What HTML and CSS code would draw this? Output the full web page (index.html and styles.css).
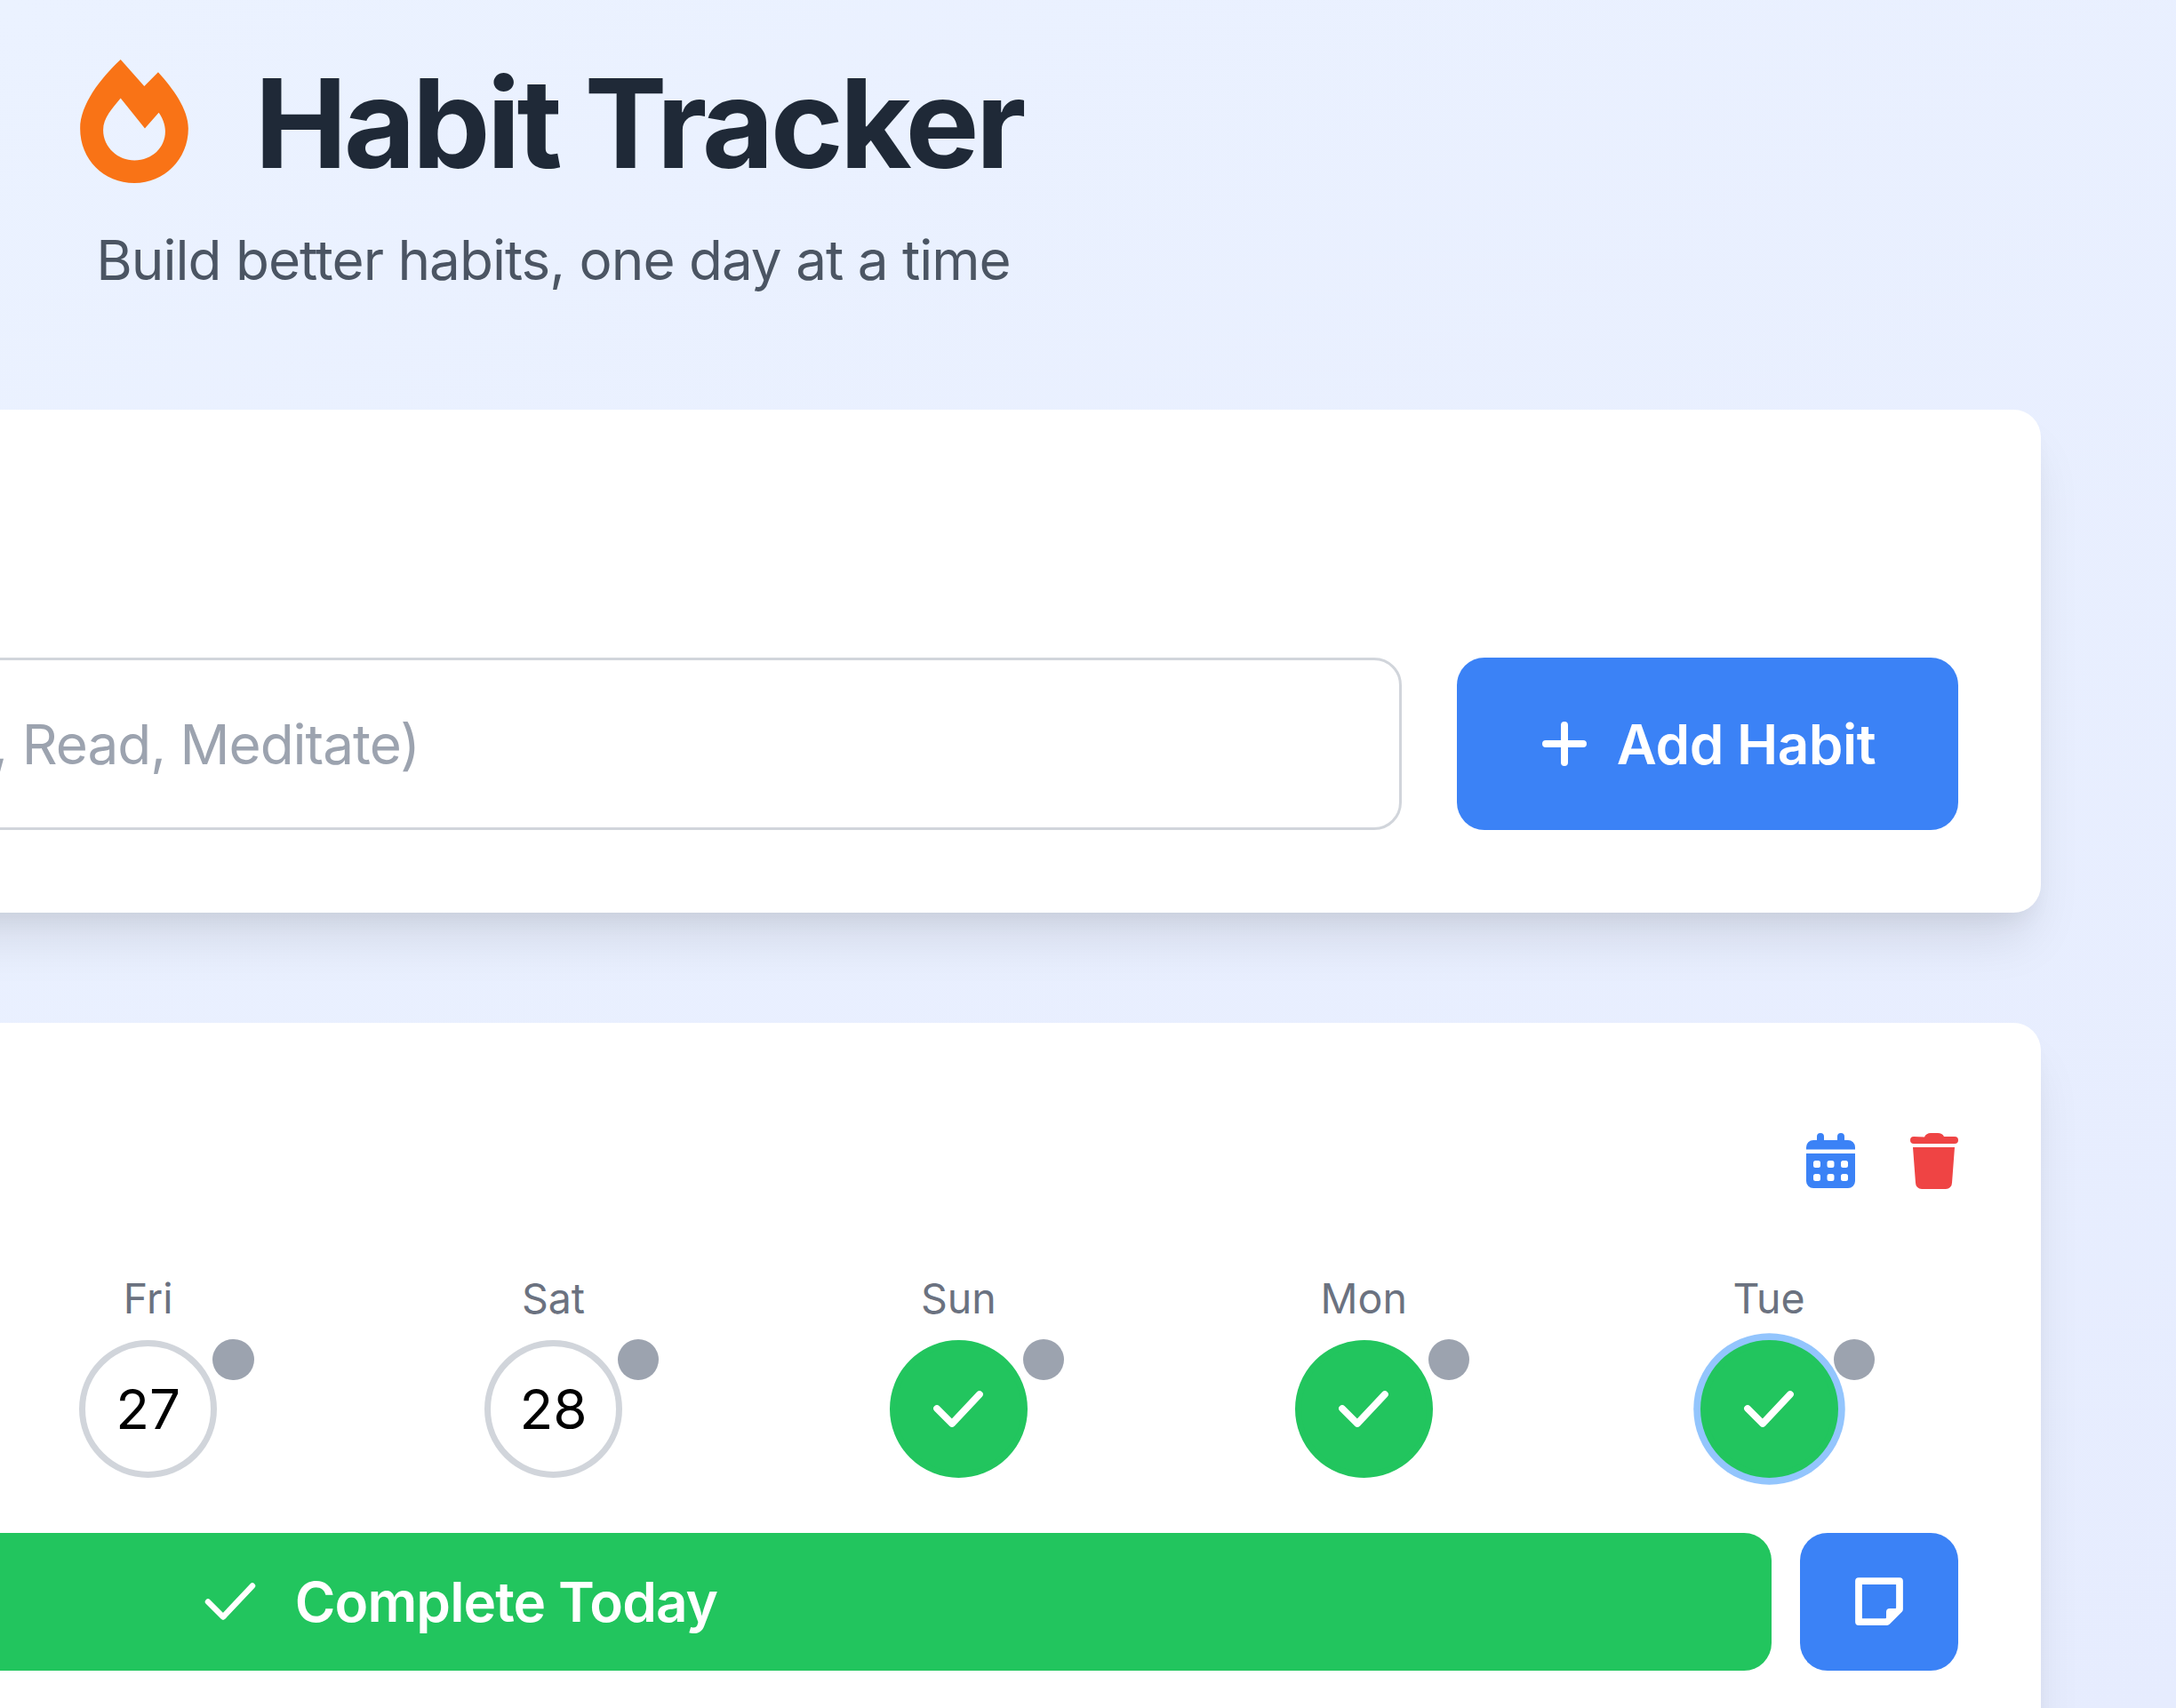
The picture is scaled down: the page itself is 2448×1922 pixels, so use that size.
FILE: index.html
```html
<!DOCTYPE html>
<html lang="en">
<head>
<meta charset="utf-8">
<title>Habit Tracker</title>
<link rel="stylesheet" href="styles.css">
</head>
<body>
<div class="app">
  <header class="header">
    <div class="brand">
      <svg class="flame" viewBox="61 47 366 418"><path fill-rule="evenodd" d="M198 47L278 137L325 90C375 145 427 215 427 280C427 385 345 465 245 465C140 465 61 385 61 280C61 200 130 110 198 47ZM198 178C170 212 139 245 139 285C139 345 190 388 245 388C305 388 349 345 349 290C349 268 340 245 327 227L280 280Z"/></svg>
      <h1 class="title">Habit Tracker</h1>
    </div>
    <p class="subtitle">Build better habits, one day at a time</p>
  </header>

  <section class="card">
    <form class="add-form">
      <input class="habit-input" type="text" placeholder="Enter a new habit (e.g., Exercise, Read, Meditate)">
      <button class="btn btn-add" type="button">
        <svg class="plus" viewBox="0 0 56 50"><path d="M28 4V46M7 25H49"/></svg>
        <span>Add Habit</span>
      </button>
    </form>
  </section>

  <section class="card">
    <div class="habit-head">
      <div class="habit-actions">
        <svg class="icon-cal" viewBox="0 0 55 62"><path d="M12 8V4a4 4 0 0 1 8 0V8H35V4a4 4 0 0 1 8 0V8H47a8 8 0 0 1 8 8V18.500H0V16a8 8 0 0 1 8-8Z"/><path fill-rule="evenodd" d="M0 23H55V54a8 8 0 0 1-8 8H8a8 8 0 0 1-8-8ZM10.500 31a2.500 2.500 0 0 0-2.500 2.500v3a2.500 2.500 0 0 0 2.500 2.500h3a2.500 2.500 0 0 0 2.500-2.500v-3a2.500 2.500 0 0 0-2.500-2.500ZM26 31a2.500 2.500 0 0 0-2.500 2.500v3a2.500 2.500 0 0 0 2.500 2.500h3a2.500 2.500 0 0 0 2.500-2.500v-3a2.500 2.500 0 0 0-2.500-2.500ZM41.500 31a2.500 2.500 0 0 0-2.500 2.500v3a2.500 2.500 0 0 0 2.500 2.500h3a2.500 2.500 0 0 0 2.500-2.500v-3a2.500 2.500 0 0 0-2.500-2.500ZM10.500 46a2.500 2.500 0 0 0-2.500 2.500v3a2.500 2.500 0 0 0 2.500 2.500h3a2.500 2.500 0 0 0 2.500-2.500v-3a2.500 2.500 0 0 0-2.500-2.500ZM26 46a2.500 2.500 0 0 0-2.500 2.500v3a2.500 2.500 0 0 0 2.500 2.500h3a2.500 2.500 0 0 0 2.500-2.500v-3a2.500 2.500 0 0 0-2.500-2.500ZM41.500 46a2.500 2.500 0 0 0-2.500 2.500v3a2.500 2.500 0 0 0 2.500 2.500h3a2.500 2.500 0 0 0 2.500-2.500v-3a2.500 2.500 0 0 0-2.500-2.500Z"/></svg>
        <svg class="icon-trash" viewBox="0 0 54 63"><path d="M16 4.500C17 1.500 20 0 23 0H31C34 0 37 1.500 38 4H50a4 4 0 0 1 0 8H4a4 4 0 0 1 0-8Z"/><path d="M3 16H50L47 56a7 7 0 0 1-7 7H13a7 7 0 0 1-7-7Z"/></svg>
      </div>
    </div>
    <div class="days">
      <div class="day day-first"><span class="day-label">Fri</span><div class="day-circle">27<span class="dot"></span></div></div>
      <div class="day"><span class="day-label">Sat</span><div class="day-circle">28<span class="dot"></span></div></div>
      <div class="day"><span class="day-label">Sun</span><div class="day-circle done"><svg class="tick" viewBox="0 0 62 48"><path d="M7 24L24 41L55 8"/></svg><span class="dot"></span></div></div>
      <div class="day"><span class="day-label">Mon</span><div class="day-circle done"><svg class="tick" viewBox="0 0 62 48"><path d="M7 24L24 41L55 8"/></svg><span class="dot"></span></div></div>
      <div class="day"><span class="day-label">Tue</span><div class="day-circle done today"><svg class="tick" viewBox="0 0 62 48"><path d="M7 24L24 41L55 8"/></svg><span class="dot"></span></div></div>
    </div>
    <div class="habit-foot">
      <button class="btn btn-complete" type="button">
        <svg class="check" viewBox="0 0 62 62"><path d="M6 31.500L23 48.500L56 13.500"/></svg>
        <span>Complete Today</span>
      </button>
      <button class="btn btn-note" type="button" aria-label="Note">
        <svg class="note" viewBox="0 0 54 54"><path class="note-line" d="M4 4H50V36L36 50H4Z"/><path class="note-fold" d="M35 39a4 4 0 0 1 4-4H50V38L38 50H35Z"/></svg>
      </button>
    </div>
  </section>
</div>
</body>
</html>
```
FILE: styles.css
```css
html, body {
  margin: 0;
  height: 100%;
  overflow: hidden;
}

body {
  background: linear-gradient(153deg, #ebf2ff 0%, #e6ecfe 100%);
  font-family: Inter, "Liberation Sans", sans-serif;
  color: #000;
}

.app {
  width: 3347px;
  margin-left: -1051px;
  padding-top: 61px;
  box-sizing: border-box;
}

.header {
  display: flex;
  flex-direction: column;
  align-items: center;
  margin-bottom: 122px;
}

.brand {
  display: flex;
  align-items: center;
  gap: 75px;
  height: 155px;
  margin: 0 5px 30px 0;
}

.flame {
  width: 122px;
  height: 139px;
  margin-bottom: 5px;
  fill: #f97316;
}

.title {
  margin: 0;
  font-size: 139.500px;
  line-height: 155px;
  font-weight: 700;
  letter-spacing: -4px;
  color: #1f2937;
}

.subtitle {
  margin: 0;
  font-size: 62px;
  line-height: 93px;
  letter-spacing: -1px;
  color: #4b5563;
}

.card {
  background: #fff;
  border-radius: 31px;
  padding: 93px;
  margin-bottom: 124px;
  box-shadow: 0 39px 58px -12px rgba(0, 0, 0, 0.1), 0 15.500px 23px -8px rgba(0, 0, 0, 0.05);
}

.add-form {
  display: flex;
  gap: 62px;
  margin-top: 186px;
}

.habit-input {
  flex: 1;
  min-width: 0;
  height: 194px;
  box-sizing: border-box;
  padding: 0 40px;
  border: 3.875px solid #d1d5db;
  border-radius: 31px;
  background: #fff;
  font: 400 62px Inter, "Liberation Sans", sans-serif;
  letter-spacing: -1px;
}

.habit-input::placeholder {
  color: #9ca3af;
  opacity: 1;
}

.btn {
  display: flex;
  align-items: center;
  justify-content: center;
  border: 0;
  border-radius: 31px;
  color: #fff;
  font: 600 62px Inter, "Liberation Sans", sans-serif;
}

.btn-add {
  width: 564px;
  height: 194px;
  flex: none;
  gap: 31px;
  background: #3b82f6;
  letter-spacing: -0.500px;
}

.plus {
  width: 56px;
  height: 50px;
  fill: none;
  stroke: #fff;
  stroke-width: 8px;
  stroke-linecap: round;
}

.habit-head {
  display: flex;
  align-items: center;
  justify-content: flex-end;
  height: 124px;
  margin-bottom: 62px;
}

.habit-actions {
  display: flex;
  align-items: center;
  gap: 62px;
}

.icon-cal {
  width: 55px;
  height: 62px;
  fill: #3b82f6;
}

.icon-trash {
  width: 54px;
  height: 63px;
  fill: #ef4444;
}

.days {
  display: grid;
  grid-template-columns: repeat(7, 1fr);
  gap: 30px;
  margin-bottom: 62px;
}

.day {
  display: flex;
  flex-direction: column;
  align-items: center;
  gap: 15.500px;
}

.day-first {
  grid-column-start: 3;
}

.day-label {
  font-size: 46.500px;
  line-height: 62px;
  color: #6b7280;
}

.day-circle {
  position: relative;
  box-sizing: border-box;
  display: flex;
  align-items: center;
  justify-content: center;
  width: 155px;
  height: 155px;
  border: 7.750px solid #d1d5db;
  border-radius: 50%;
  font-size: 62px;
}

.done {
  background: #22c55e;
  border-color: #22c55e;
}

.today {
  box-shadow: 0 0 0 7.750px #93c5fd;
}

.tick {
  width: 62px;
  height: 48px;
  fill: none;
  stroke: #fff;
  stroke-width: 7.750px;
  stroke-linecap: round;
  stroke-linejoin: round;
}

.dot {
  position: absolute;
  top: -7.750px;
  left: 143px;
  width: 46.500px;
  height: 46.500px;
  border-radius: 50%;
  background: #9ca3af;
}

.habit-foot {
  display: flex;
  gap: 32px;
}

.btn-complete {
  flex: 1;
  height: 155px;
  gap: 42px;
  background: #22c55e;
  letter-spacing: -0.900px;
}

.check {
  width: 62px;
  height: 62px;
  fill: none;
  stroke: #fff;
  stroke-width: 6.500px;
  stroke-linecap: round;
  stroke-linejoin: round;
}

.btn-note {
  flex: none;
  width: 178px;
  height: 155px;
  background: #3b82f6;
}

.note {
  width: 54px;
  height: 54px;
}

.note-line {
  fill: none;
  stroke: #fff;
  stroke-width: 7.750px;
  stroke-linejoin: round;
}

.note-fold {
  fill: #fff;
}
```
